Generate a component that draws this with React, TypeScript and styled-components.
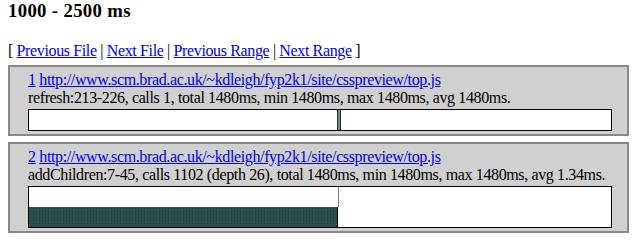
import styled, { createGlobalStyle, css } from 'styled-components';

const GlobalStyle = createGlobalStyle`
  html, body {
    margin: 0;
    padding: 0;
    background: #ffffff;
  }

  body {
    padding: 0 8px;
    font-family: "Liberation Serif", "Times New Roman", serif;
    font-size: 16px;
    line-height: 18px;
    letter-spacing: -0.37px;
    color: #000;
  }
`;

const Heading = styled.h3`
  margin: 0 0 21px;
  font-size: 18.72px;
  line-height: 21px;
  font-weight: bold;
  letter-spacing: 0.35px;
`;

const Nav = styled.div`
  margin-bottom: 5px;
  white-space: nowrap;
`;

const Link = styled.a`
  color: #0000ee;
  text-decoration: underline;
`;

const Box = styled.div`
  border: 2px solid #888888;
  background: #d0d0d0;
  padding: 4px 15px 3px 18px;

  & + & {
    margin-top: 6px;
  }
`;

const Line = styled.div`
  white-space: nowrap;
`;

const Bar = styled.div`
  margin-top: 2px;
  width: 582px;
  border: 1px solid #000;
  background: #fff;
`;

const Track = styled.div`
  position: relative;
  height: 20px;
`;

type Kind = 'call' | 'tick' | 'fill';

const Segment = styled.div<{ $kind: Kind }>`
  position: absolute;
  top: 0;
  bottom: 0;
  box-sizing: border-box;

  ${(p) =>
    p.$kind === 'call' &&
    css`
      background: #708090;
      border-left: 1px solid #2b3540;
      border-right: 1px solid #2b3540;
    `}

  ${(p) =>
    p.$kind === 'tick' &&
    css`
      background: #6f8296;
    `}

  ${(p) =>
    p.$kind === 'fill' &&
    css`
      background-color: #2f4f4f;
      background-image: radial-gradient(#243c3c 0.7px, transparent 0.8px);
      background-size: 3px 3px;
      border-right: 1px solid #000;
    `}
`;

type Seg = { left: number; width: number; kind: Kind };

type Entry = {
  n: number;
  url: string;
  stats: string;
  rows: Seg[][];
};

const url = 'http://www.scm.brad.ac.uk/~kdleigh/fyp2k1/site/csspreview/top.js';

const entries: Entry[] = [
  {
    n: 1,
    url,
    stats: 'refresh:213-226, calls 1, total 1480ms, min 1480ms, max 1480ms, avg 1480ms.',
    rows: [[{ left: 308, width: 4, kind: 'call' }]],
  },
  {
    n: 2,
    url,
    stats:
      'addChildren:7-45, calls 1102 (depth 26), total 1480ms, min 1480ms, max 1480ms, avg 1.34ms.',
    rows: [
      [{ left: 309, width: 1, kind: 'tick' }],
      [{ left: 0, width: 309, kind: 'fill' }],
    ],
  },
];

export default function App() {
  return (
    <>
      <GlobalStyle />
      <Heading>1000 - 2500 ms</Heading>
      <Nav>
        [ <Link href="#">Previous File</Link> | <Link href="#">Next File</Link> |{' '}
        <Link href="#">Previous Range</Link> | <Link href="#">Next Range</Link> ]
      </Nav>
      {entries.map((e) => (
        <Box key={e.n}>
          <Line>
            <Link href="#">{e.n}</Link> <Link href="#">{e.url}</Link>
          </Line>
          <Line>{e.stats}</Line>
          <Bar>
            {e.rows.map((row, i) => (
              <Track key={i}>
                {row.map((s, j) => (
                  <Segment
                    key={j}
                    $kind={s.kind}
                    style={{ left: s.left, width: s.width }}
                  />
                ))}
              </Track>
            ))}
          </Bar>
        </Box>
      ))}
    </>
  );
}
